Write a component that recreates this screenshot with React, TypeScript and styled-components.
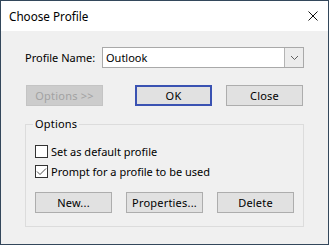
import React from 'react';
import styled, { createGlobalStyle } from 'styled-components';

const Global = createGlobalStyle`
  html, body { margin: 0; padding: 0; background: #ffffff; }
  body { font-family: "Noto Sans", "Segoe UI", sans-serif; -webkit-font-smoothing: antialiased; }
  * { box-sizing: border-box; }
`;

const Window = styled.div`
  width: 329px;
  height: 245px;
  border: 1px solid #33475b;
  display: flex;
  flex-direction: column;
  background: #f0f0f0;
  font-size: 11px;
  color: #000;
`;

const TitleBar = styled.div`
  height: 30px;
  flex: none;
  background: #ffffff;
  display: flex;
  align-items: center;
  justify-content: space-between;
  padding: 0 10px 0 8px;
`;

const Title = styled.span`
  font-size: 11.7px;
  line-height: 16px;
  color: #000;
`;

const CloseIcon = styled.svg`
  width: 10px;
  height: 10px;
  display: block;
`;

const Body = styled.div`
  flex: 1;
  padding: 16px 24px 0 24px;
  display: flex;
  flex-direction: column;
`;

const FieldRow = styled.div`
  display: flex;
  align-items: center;
  height: 21px;
`;

const Label = styled.span`
  width: 77px;
  flex: none;
  line-height: 16px;
`;

const Combo = styled.div`
  flex: 1;
  height: 21px;
  border: 1px solid #a9a9a9;
  background: #ffffff;
  display: flex;
  align-items: stretch;
`;

const ComboText = styled.span`
  flex: 1;
  padding-left: 3px;
  line-height: 19px;
`;

const DropButton = styled.div`
  width: 19px;
  border-left: 1px solid #b4b4b4;
  background: #ececec;
  display: flex;
  align-items: center;
  justify-content: center;
`;

const ButtonRow = styled.div<{ $inset?: boolean }>`
  display: flex;
  margin-top: ${p => (p.$inset ? '14px' : '17px')};
  padding: ${p => (p.$inset ? '0' : '0 1px')};
  gap: 14px;
`;

const Button = styled.div<{ $default?: boolean; $disabled?: boolean; $push?: boolean }>`
  width: 77px;
  height: 21px;
  display: flex;
  align-items: center;
  justify-content: center;
  line-height: 16px;
  letter-spacing: 0.2px;
  background: ${p => (p.$disabled ? '#cccccc' : '#e1e1e1')};
  color: ${p => (p.$disabled ? '#a2a2a2' : '#000')};
  border: ${p => (p.$default ? '2px solid #3a52b2' : p.$disabled ? '1px solid #c4c4c4' : '1px solid #adadad')};
  margin-left: ${p => (p.$push ? 'auto' : '0')};
`;

const Group = styled.fieldset`
  margin: 10px 0 0 0;
  padding: 13px 9px 13px 9px;
  border: 1px solid #dcdcdc;
  min-width: 0;
`;

const Legend = styled.legend`
  padding: 0 2px;
  margin-left: -2px;
  line-height: 16px;
  font-size: 11px;
  letter-spacing: 0.2px;
`;

const CheckRow = styled.label<{ $gap?: boolean }>`
  display: flex;
  align-items: center;
  height: 13px;
  margin-top: ${p => (p.$gap ? '7px' : '0')};
  gap: 3px;
  line-height: 16px;
`;

const Box = styled.span`
  width: 13px;
  height: 13px;
  flex: none;
  border: 1px solid #333333;
  background: #ffffff;
  display: flex;
  align-items: center;
  justify-content: center;
`;

const Check = ({ checked }: { checked?: boolean }) => (
  <Box>
    {checked && (
      <svg width="11" height="11" viewBox="0 0 11 11">
        <path d="M1 5.5 L4 8.5 L10 2.5" fill="none" stroke="#3a3a3a" strokeWidth="0.9" />
      </svg>
    )}
  </Box>
);

export default function App() {
  return (
    <>
      <Global />
      <Window>
        <TitleBar>
          <Title>Choose Profile</Title>
          <CloseIcon viewBox="0 0 10 10">
            <path d="M0.5 0.5 L9.5 9.5 M9.5 0.5 L0.5 9.5" stroke="#111" strokeWidth="1" />
          </CloseIcon>
        </TitleBar>
        <Body>
          <FieldRow>
            <Label>Profile Name:</Label>
            <Combo>
              <ComboText>Outlook</ComboText>
              <DropButton>
                <svg width="9" height="6" viewBox="0 0 9 6">
                  <path d="M1 1 L4.5 4.5 L8 1" fill="none" stroke="#606060" strokeWidth="1" />
                </svg>
              </DropButton>
            </Combo>
          </FieldRow>
          <ButtonRow>
            <Button $disabled>Options &gt;&gt;</Button>
            <Button $default $push>OK</Button>
            <Button>Close</Button>
          </ButtonRow>
          <Group>
            <Legend>Options</Legend>
            <CheckRow>
              <Check />
              <span>Set as default profile</span>
            </CheckRow>
            <CheckRow $gap>
              <Check checked />
              <span>Prompt for a profile to be used</span>
            </CheckRow>
            <ButtonRow $inset>
              <Button>New...</Button>
              <Button>Properties...</Button>
              <Button>Delete</Button>
            </ButtonRow>
          </Group>
        </Body>
      </Window>
    </>
  );
}
